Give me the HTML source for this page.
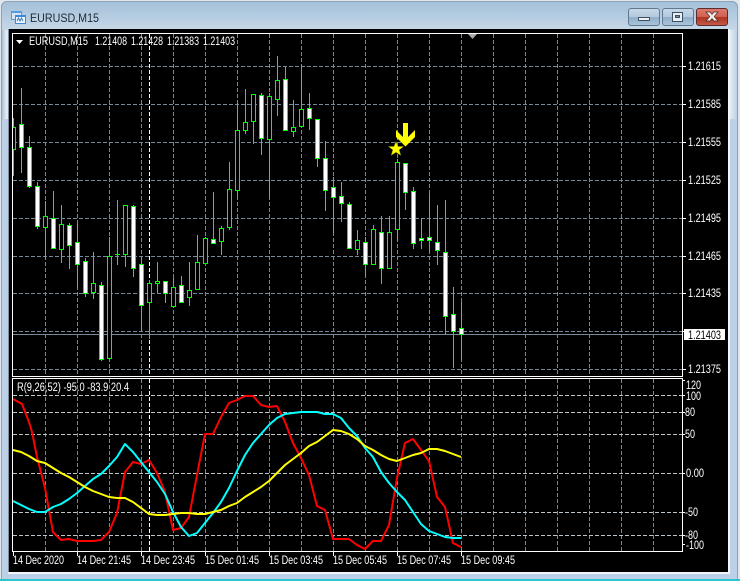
<!DOCTYPE html>
<html><head><meta charset="utf-8"><title>EURUSD,M15</title>
<style>
html,body{margin:0;padding:0;background:#fff}
#w{position:relative;width:740px;height:581px;overflow:hidden;background:#dfe6ec}
#w div{position:absolute}
svg{position:absolute;left:0;top:0}
text{font-family:"Liberation Sans",sans-serif;fill:#fff;font-size:12px}
</style></head><body>
<div id="w">
<div style="left:1px;top:1px;width:737px;height:580px;border-radius:6px 6px 0 0;background:linear-gradient(#a3bfd8 0,#b3cbe0 14px,#c6d8e7 29px,#bcd1e7 30px,#bcd1e7 100%);box-shadow:inset 0 0 0 1px #8fa3b5"></div>
<div style="left:2px;top:30px;width:6px;height:89px;background:linear-gradient(90deg,#a9c0d9,#dbe6ee 60%,#e4ecf1)"></div>
<div style="left:8px;top:29px;width:1px;height:544px;background:#7f8fa0"></div>
<div style="left:730px;top:30px;width:6px;height:89px;background:linear-gradient(90deg,#e4ecf1,#c3d5e6)"></div>
<div style="left:9px;top:29px;width:719px;height:543px;background:#000"></div>
<div style="left:8px;top:572px;width:722px;height:2px;background:#f2f6fa"></div>
<div style="left:728px;top:29px;width:2px;height:545px;background:#f2f6fa"></div>
<div style="left:0;top:579px;width:740px;height:2px;background:#2ec4cf"></div>
<div style="left:628px;top:8px;width:30px;height:16px;border:1px solid #62788f;border-radius:3px;background:linear-gradient(#c6d8e8,#b2c8dc 50%,#8fadc9 52%,#a9c4dc)"></div>
<div style="left:662px;top:8px;width:30px;height:16px;border:1px solid #62788f;border-radius:3px;background:linear-gradient(#c6d8e8,#b2c8dc 50%,#8fadc9 52%,#a9c4dc)"></div>
<div style="left:696px;top:8px;width:30px;height:16px;border:1px solid #5e2c30;border-radius:3px;background:linear-gradient(#dd7a6c,#cf5f50 50%,#b0331f 52%,#c25a45)"></div>
<svg width="740" height="581" viewBox="0 0 740 581">
<!-- window icons -->
<rect x="638.5" y="17.5" width="11" height="3" fill="#f0f0f0" stroke="#3d4f60"/>
<rect x="672.5" y="12.5" width="10" height="9" fill="#e8eef3" stroke="#3d4f60"/>
<rect x="675.5" y="15.5" width="4" height="2" fill="#6f8aa3" stroke="#3d4f60"/>
<path d="M706 12h4l2 2.500 2-2.500h4l-3.800 4.500 3.800 4.500h-4l-2-2.500-2 2.500h-4l3.800-4.500z" fill="#f4efe9" stroke="#4a2a2a" stroke-width=".7"/>
<!-- title icon -->
<rect x="11.500" y="11.500" width="10" height="8" fill="#d7e6f5" stroke="#5b9bdc"/>
<rect x="15.500" y="15.500" width="10" height="8" fill="#eef6fd" stroke="#3d8ad8"/>
<path d="M17 21l1.500-3 1.500 3 1.500-3 1.500 3" fill="none" stroke="#3d7cc0"/>
<rect x="11" y="11" width="10" height="2" fill="#5b9bdc"/>
<rect x="15" y="15" width="11" height="2" fill="#3d8ad8"/>
<text x="30" y="22" style="fill:#1b2a38;font-size:12px" textLength="69" lengthAdjust="spacingAndGlyphs">EURUSD,M15</text>

<!-- grid -->
<g shape-rendering="crispEdges" fill="none">
<path stroke="#778899" stroke-dasharray="4 2" d="M13 66.500H682M13 104.500H682M13 142.500H682M13 180.500H682M13 218.500H682M13 256.500H682M13 293.500H682M13 331.500H682M13 369.500H682"/>
<path stroke="#778899" stroke-dasharray="4 2" d="M45.500 34V376M77.500 34V376M109.500 34V376M141.500 34V376M173.500 34V376M205.500 34V376M237.500 34V376M269.500 34V376M301.500 34V376M333.500 34V376M365.500 34V376M397.500 34V376M429.500 34V376M461.500 34V376M493.500 34V376M525.500 34V376M557.500 34V376M589.500 34V376M621.500 34V376M653.500 34V376"/>
<path stroke="#778899" stroke-dasharray="4 2" d="M45.500 379V551M77.500 379V551M109.500 379V551M141.500 379V551M173.500 379V551M205.500 379V551M237.500 379V551M269.500 379V551M301.500 379V551M333.500 379V551M365.500 379V551M397.500 379V551M429.500 379V551M461.500 379V551M493.500 379V551M525.500 379V551M557.500 379V551M589.500 379V551M621.500 379V551M653.500 379V551"/>
<path stroke="#bcc4cc" stroke-dasharray="4 2" d="M13 395.500H682M13 412.500H682M13 434.500H682M13 473.500H682M13 512.500H682M13 535.500H682"/>
<path stroke="#fff" stroke-dasharray="4 2" d="M149.500 34V376M149.500 379V551"/>
<path stroke="#778899" d="M13 334.500H682"/>
</g>

<!-- wicks -->
<clipPath id="c"><rect x="13" y="34" width="669" height="342"/></clipPath>
<g clip-path="url(#c)" shape-rendering="crispEdges">
<path fill="none" stroke="#0f0" d="M13.500 118V176M21.500 88V173M29.500 136V188M37.500 182V229M45.500 201V259M53.500 191V248M61.500 205V263M69.500 223V269M77.500 224V288M85.500 258V297M93.500 252V299M101.500 282V361M109.500 237V359M117.500 200V265M125.500 205V267M133.500 205V277M141.500 257V331M149.500 280V339M157.500 262V293M165.500 281V303M173.500 278V307M181.500 276V302M189.500 262V306M197.500 235V289M205.500 237V263M213.500 192V243M221.500 226V255M229.500 162V230M237.500 103V198M245.500 89V134M253.500 94V144M261.500 93V155M269.500 93V198M277.500 56V116M285.500 67V130M293.500 100V137M301.500 65V126M309.500 93V130M317.500 119V167M325.500 141V211M333.500 177V233M341.500 182V222M349.500 202V249M357.500 230V255M365.500 237V276M373.500 225V265M381.500 216V284M389.500 216V268M397.500 159V241M405.500 163V210M413.500 187V249M421.500 218V249M429.500 194V252M437.500 205V265M445.500 200V335M453.500 287V368M461.500 302V360M115 254.500H120"/>
<g stroke="#0f0" fill="#000">
<rect x="11.500" y="127.500" width="4" height="22"/>
<rect x="43.500" y="216.500" width="4" height="11"/>
<rect x="59.500" y="224.500" width="4" height="25"/>
<rect x="91.500" y="283.500" width="4" height="9"/>
<rect x="107.500" y="256.500" width="4" height="102"/>
<rect x="123.500" y="205.500" width="4" height="49"/>
<rect x="147.500" y="283.500" width="4" height="19"/>
<rect x="155.500" y="281.500" width="4" height="2"/>
<rect x="171.500" y="287.500" width="4" height="19"/>
<rect x="187.500" y="290.500" width="4" height="7"/>
<rect x="195.500" y="262.500" width="4" height="27"/>
<rect x="203.500" y="238.500" width="4" height="25"/>
<rect x="219.500" y="228.500" width="4" height="13"/>
<rect x="227.500" y="189.500" width="4" height="38"/>
<rect x="235.500" y="130.500" width="4" height="60"/>
<rect x="243.500" y="122.500" width="4" height="8"/>
<rect x="251.500" y="94.500" width="4" height="27"/>
<rect x="267.500" y="96.500" width="4" height="43"/>
<rect x="275.500" y="80.500" width="4" height="19"/>
<rect x="291.500" y="127.500" width="4" height="4"/>
<rect x="299.500" y="109.500" width="4" height="17"/>
<rect x="355.500" y="240.500" width="4" height="9"/>
<rect x="371.500" y="229.500" width="4" height="35"/>
<rect x="387.500" y="232.500" width="4" height="36"/>
<rect x="395.500" y="162.500" width="4" height="67"/>
</g>
<g stroke="#0f0" fill="#fff">
<rect x="19.500" y="124.500" width="4" height="23"/>
<rect x="27.500" y="147.500" width="4" height="39"/>
<rect x="35.500" y="186.500" width="4" height="40"/>
<rect x="51.500" y="218.500" width="4" height="30"/>
<rect x="67.500" y="225.500" width="4" height="20"/>
<rect x="75.500" y="242.500" width="4" height="22"/>
<rect x="83.500" y="261.500" width="4" height="32"/>
<rect x="99.500" y="285.500" width="4" height="74"/>
<rect x="131.500" y="206.500" width="4" height="62"/>
<rect x="139.500" y="264.500" width="4" height="41"/>
<rect x="163.500" y="281.500" width="4" height="12"/>
<rect x="179.500" y="285.500" width="4" height="17"/>
<rect x="211.500" y="239.500" width="4" height="4"/>
<rect x="259.500" y="95.500" width="4" height="43"/>
<rect x="283.500" y="79.500" width="4" height="51"/>
<rect x="307.500" y="108.500" width="4" height="10"/>
<rect x="315.500" y="119.500" width="4" height="39"/>
<rect x="323.500" y="158.500" width="4" height="32"/>
<rect x="331.500" y="187.500" width="4" height="10"/>
<rect x="339.500" y="196.500" width="4" height="7"/>
<rect x="347.500" y="204.500" width="4" height="44"/>
<rect x="363.500" y="242.500" width="4" height="22"/>
<rect x="379.500" y="232.500" width="4" height="36"/>
<rect x="403.500" y="163.500" width="4" height="29"/>
<rect x="411.500" y="191.500" width="4" height="52"/>
<rect x="419.500" y="238.500" width="4" height="2"/>
<rect x="427.500" y="237.500" width="4" height="3"/>
<rect x="435.500" y="242.500" width="4" height="8"/>
<rect x="443.500" y="252.500" width="4" height="64"/>
<rect x="451.500" y="314.500" width="4" height="17"/>
<rect x="459.500" y="328.500" width="4" height="6"/>
</g>
</g>

<!-- arrow and star -->
<polygon fill="#ff0" points="396,130 403,137 403,123 408,123 408,137 415,130 415,137 405.500,146.500 396,137"/>
<polygon fill="#ff0" stroke="#8a8a00" stroke-width=".5" points="396,141.500 398,146.500 403.500,146.500 399.200,149.900 400.800,155.300 396,152.300 391.200,155.300 392.800,149.900 388.500,146.500 394,146.500"/>

<!-- indicator lines -->
<g fill="none" stroke-width="2" stroke-linejoin="round">
<polyline stroke="#f00" points="13,399 22,404 29,422 32,432 37,457 45,488 53,532 61,540 69,539 77,541 93,541 101,540 109,532 117,513 125,472 133,462 141,464 149,460 157,473 165,492 173,530 181,528 189,517 197,475 205,434 213,434 221,417 229,403 237,400 245,396 253,396 261,405 269,407 277,406 285,422 293,443 301,458 309,475 317,506 325,510 333,539 341,539 349,539 357,545 365,549 373,541 381,541 389,525 397,478 405,443 413,439 421,450 429,461 437,497 445,507 453,543 461,547"/>
<polyline stroke="#0ff" points="13,501 21,505 29,509 37,512 45,512 53,507 61,504 69,499 77,493 85,486 93,479 101,474 109,466 117,457 125,444 133,452 141,462 149,472 157,482 165,494 173,512 181,527 189,536 197,533 205,523 213,513 221,502 229,488 237,471 245,455 253,443 261,434 269,425 277,418 285,414 293,413 301,412 309,412 317,412 325,414 333,414 341,418 349,428 357,436 365,448 373,457 381,472 389,483 397,492 405,500 413,512 421,524 429,531 437,534 445,537 453,538 461,538"/>
<polyline stroke="#ff0" points="13,450 21,452 29,456 37,461 45,463 53,468 61,473 69,477 77,482 85,487 93,491 101,494 109,497 117,498 125,498 133,502 141,508 149,514 157,515 165,515 173,514 181,513 189,513 197,514 205,514 213,512 221,510 229,506 237,503 245,497 253,492 261,487 269,481 277,473 285,465 293,459 301,453 309,446 317,442 325,436 333,430 341,431 349,434 357,439 365,446 373,450 381,455 389,459 397,461 405,458 413,455 421,453 429,449 437,449 445,451 453,454 461,457"/>
</g>

<!-- borders -->
<g shape-rendering="crispEdges" fill="none" stroke="#fff">
<rect x="12.500" y="33.500" width="670" height="343"/>
<rect x="12.500" y="378.500" width="670" height="173"/>
<path d="M683 66.500h3M683 104.500h3M683 142.500h3M683 180.500h3M683 218.500h3M683 256.500h3M683 293.500h3M683 331.500h3M683 369.500h3M683 395.500h2M683 412.500h2M683 434.500h2M683 473.500h2M683 512.500h2M683 535.500h2M683 380.500h2M683 544.500h2"/>
<path d="M13.500 552v4M77.500 552v4M141.500 552v4M205.500 552v4M269.500 552v4M333.500 552v4M397.500 552v4M461.500 552v4"/>
</g>
<polygon points="468,34 477,34 472.500,39" fill="#a9a9a9"/>
<polygon points="16,40 23,40 19.500,44" fill="#fff"/>

<!-- header -->
<text x="29" y="45" style="font-size:11.500px" textLength="59" lengthAdjust="spacingAndGlyphs">EURUSD,M15</text>
<text x="95" y="45" style="font-size:11.500px" textLength="32" lengthAdjust="spacingAndGlyphs">1.21408</text>
<text x="131" y="45" style="font-size:11.500px" textLength="32" lengthAdjust="spacingAndGlyphs">1.21428</text>
<text x="167" y="45" style="font-size:11.500px" textLength="32" lengthAdjust="spacingAndGlyphs">1.21383</text>
<text x="203" y="45" style="font-size:11.500px" textLength="32" lengthAdjust="spacingAndGlyphs">1.21403</text>
<text x="17" y="391" style="font-size:11.500px" textLength="112" lengthAdjust="spacingAndGlyphs">R(9,26,52) -95.0 -83.9 20.4</text>

<!-- price axis -->
<g>
<text x="688" y="70" textLength="33" lengthAdjust="spacingAndGlyphs">1.21615</text>
<text x="688" y="108" textLength="33" lengthAdjust="spacingAndGlyphs">1.21585</text>
<text x="688" y="146" textLength="33" lengthAdjust="spacingAndGlyphs">1.21555</text>
<text x="688" y="184" textLength="33" lengthAdjust="spacingAndGlyphs">1.21525</text>
<text x="688" y="222" textLength="33" lengthAdjust="spacingAndGlyphs">1.21495</text>
<text x="688" y="260" textLength="33" lengthAdjust="spacingAndGlyphs">1.21465</text>
<text x="688" y="297" textLength="33" lengthAdjust="spacingAndGlyphs">1.21435</text>
<text x="688" y="373" textLength="33" lengthAdjust="spacingAndGlyphs">1.21375</text>
</g>
<rect x="684" y="329" width="41" height="11" fill="#fff"/>
<text x="688" y="339" style="fill:#000" textLength="33" lengthAdjust="spacingAndGlyphs">1.21403</text>

<!-- indicator axis -->
<text x="686" y="389" textLength="15" lengthAdjust="spacingAndGlyphs">120</text>
<text x="686" y="400" textLength="15" lengthAdjust="spacingAndGlyphs">100</text>
<text x="685" y="416" textLength="10" lengthAdjust="spacingAndGlyphs">80</text>
<text x="685" y="438" textLength="10" lengthAdjust="spacingAndGlyphs">50</text>
<text x="686" y="477" textLength="18" lengthAdjust="spacingAndGlyphs">0.00</text>
<text x="685" y="516" textLength="13" lengthAdjust="spacingAndGlyphs">-50</text>
<text x="685" y="539" textLength="13" lengthAdjust="spacingAndGlyphs">-80</text>
<text x="686" y="549" textLength="18" lengthAdjust="spacingAndGlyphs">-100</text>

<!-- time axis -->
<text x="13" y="564" textLength="51" lengthAdjust="spacingAndGlyphs">14 Dec 2020</text>
<text x="77" y="564" textLength="54" lengthAdjust="spacingAndGlyphs">14 Dec 21:45</text>
<text x="141" y="564" textLength="54" lengthAdjust="spacingAndGlyphs">14 Dec 23:45</text>
<text x="205" y="564" textLength="54" lengthAdjust="spacingAndGlyphs">15 Dec 01:45</text>
<text x="269" y="564" textLength="54" lengthAdjust="spacingAndGlyphs">15 Dec 03:45</text>
<text x="333" y="564" textLength="54" lengthAdjust="spacingAndGlyphs">15 Dec 05:45</text>
<text x="397" y="564" textLength="54" lengthAdjust="spacingAndGlyphs">15 Dec 07:45</text>
<text x="461" y="564" textLength="54" lengthAdjust="spacingAndGlyphs">15 Dec 09:45</text>
</svg>
</div>
</body></html>
